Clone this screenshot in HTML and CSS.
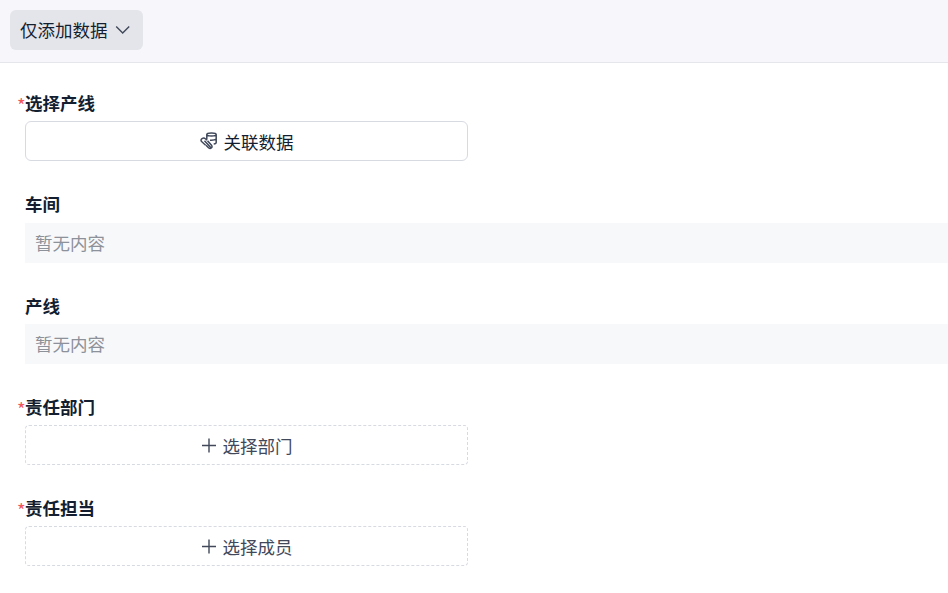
FILE: index.html
```html
<!DOCTYPE html>
<html lang="zh-CN">
<head>
  <meta charset="UTF-8">
  <meta name="viewport" content="width=device-width, initial-scale=1">
  <title>仅添加数据</title>
  <link rel="stylesheet" href="styles.css">
</head>
<body>
  <header class="toolbar">
    <button class="mode-btn">
      <span>仅添加数据</span>
      <svg class="chevron" width="16" height="16" viewBox="0 0 16 16"><path d="M1.2 4.500 7.700 11l6.500-6.500"/></svg>
    </button>
  </header>

  <main class="form">
    <div class="field">
      <div class="label required">选择产线</div>
      <button class="picker">
        <svg class="link-icon" width="18" height="18" viewBox="0 0 18 18">
          <path d="M6.800 2.500c0-2 9.400-2 9.400 0s-9.400 2-9.400 0v5M16.200 2.500v8c0 .8-1 1.400-2.500 1.600M10 8.200c3 .2 5-.2 6.200-1.200"/>
          <path d="M7 8.200 5.400 6.800C3.500 5-.4 7.200 1.600 9.600l4 3.600M4.500 8.800l6.200 6.700M6 13.200l2.500 2.500c2 1.800 4.500-.3 3-2.500L7.500 8.700"/>
        </svg>
        <span>关联数据</span>
      </button>
    </div>

    <div class="field">
      <div class="label">车间</div>
      <div class="empty">暂无内容</div>
    </div>

    <div class="field">
      <div class="label">产线</div>
      <div class="empty">暂无内容</div>
    </div>

    <div class="field">
      <div class="label required">责任部门</div>
      <button class="picker dashed">
        <svg class="plus" width="16" height="16" viewBox="0 0 16 16"><path d="M8 1.500v14M1 8.500h14"/></svg>
        <span>选择部门</span>
      </button>
    </div>

    <div class="field">
      <div class="label required">责任担当</div>
      <button class="picker dashed">
        <svg class="plus" width="16" height="16" viewBox="0 0 16 16"><path d="M8 1.500v14M1 8.500h14"/></svg>
        <span>选择成员</span>
      </button>
    </div>
  </main>
</body>
</html>
```

FILE: styles.css
```css
* {
  box-sizing: border-box;
}

body {
  margin: 0;
  background: #fff;
  color: #141e31;
  font-family: "Noto Sans CJK SC", sans-serif;
  font-size: 17.5px;
  overflow: hidden;
}

button {
  font: inherit;
  color: inherit;
  cursor: pointer;
}

svg {
  fill: none;
  stroke: #40485a;
  stroke-width: 1.4;
}

.toolbar {
  height: 63px;
  padding: 10px;
  background: #f6f6fb;
  border-bottom: 1px solid #e4e6eb;
}

.mode-btn {
  display: flex;
  align-items: center;
  gap: 7px;
  width: 133px;
  height: 40px;
  padding: 0 10px;
  border: none;
  border-radius: 6px;
  background: #e4e5ea;
  white-space: nowrap;
}

.mode-btn span {
  padding-bottom: 2px;
}

.form {
  padding: 28px 0 0 25px;
}

.field {
  margin-bottom: 31.3px;
}

.label {
  position: relative;
  height: 30.3px;
  margin-bottom: -0.1px;
  line-height: 24px;
  font-weight: 700;
}

.required::before {
  content: "*";
  position: absolute;
  top: 2px;
  left: -8px;
  color: #f2555a;
  font-size: 18.5px;
  font-weight: 400;
}

.picker {
  display: flex;
  align-items: center;
  justify-content: center;
  gap: 6px;
  width: 443px;
  height: 40px;
  padding: 0;
  border: 1px solid #d8dae2;
  border-radius: 6px;
  background: #fff;
}

.link-icon {
  stroke-width: 1.5;
}

.field + .field {
  margin-top: -0.2px;
}

.dashed {
  border: 1px dashed #d8dae2;
  border-radius: 4px;
  color: #40485a;
}

.empty {
  height: 40px;
  padding-left: 10px;
  line-height: 40px;
  background: #f7f8fa;
  color: #8d9199;
}
```
